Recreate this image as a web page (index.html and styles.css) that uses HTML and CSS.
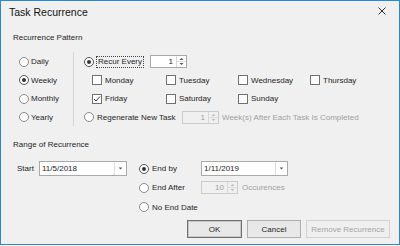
FILE: index.html
```html
<!DOCTYPE html>
<html lang="en">
<head>
    <meta charset="UTF-8">
    <title>Task Recurrence</title>
    <link rel="stylesheet" href="styles.css">
</head>
<body>
    <div class="window">
        <div class="titlebar">
            <span class="title">Task Recurrence</span>
            <svg class="close" viewBox="0 0 8 8"><path d="M0.5 0.5 L7.5 7.5 M7.5 0.5 L0.5 7.5" stroke="#333" stroke-width="1"/></svg>
        </div>
        <div class="content">
            <div class="group-label">Recurrence Pattern</div>
            <div class="pattern">
                <div class="freq">
                    <div class="opt"><span class="radio"></span>Daily</div>
                    <div class="opt"><span class="radio on"></span>Weekly</div>
                    <div class="opt"><span class="radio"></span>Monthly</div>
                    <div class="opt"><span class="radio"></span>Yearly</div>
                </div>
                <div class="divider"></div>
                <div class="recur">
                    <div class="opt">
                        <span class="radio on"></span>
                        <span class="focus">Recur Every</span>
                        <div class="spin">
                            <span class="val">1</span>
                            <span class="arrows">
                                <svg viewBox="0 0 9 11"><path d="M2.5 4 L4.5 2 L6.5 4 Z M2.5 7 L6.5 7 L4.5 9 Z" fill="#555"/><path d="M0 5.5 H9" stroke="#ddd"/></svg>
                            </span>
                        </div>
                    </div>
                    <div class="days">
                        <div class="opt"><span class="check"></span>Monday</div>
                        <div class="opt"><span class="check"></span>Tuesday</div>
                        <div class="opt"><span class="check"></span>Wednesday</div>
                        <div class="opt"><span class="check"></span>Thursday</div>
                    </div>
                    <div class="days">
                        <div class="opt">
                            <span class="check"><svg viewBox="0 0 8 8"><path d="M1 4 L3 6 L7 1.5" fill="none" stroke="#333" stroke-width="1"/></svg></span>Friday
                        </div>
                        <div class="opt"><span class="check"></span>Saturday</div>
                        <div class="opt"><span class="check"></span>Sunday</div>
                    </div>
                    <div class="opt">
                        <span class="radio"></span>
                        <span class="regen">Regenerate New Task</span>
                        <div class="spin disabled">
                            <span class="val">1</span>
                            <span class="arrows">
                                <svg viewBox="0 0 9 11"><path d="M2.5 4 L4.5 2 L6.5 4 Z M2.5 7 L6.5 7 L4.5 9 Z" fill="#bbb"/><path d="M0 5.5 H9" stroke="#ddd"/></svg>
                            </span>
                        </div>
                        <span class="muted after">Week(s) After Each Task Is Completed</span>
                    </div>
                </div>
            </div>

            <div class="group-label range-label">Range of Recurrence</div>
            <div class="range">
                <div class="start">
                    <span class="start-label">Start</span>
                    <div class="combo">
                        <span class="combo-text">11/5/2018</span>
                        <span class="drop"><svg viewBox="0 0 12 13"><path d="M4 5.5 L8 5.5 L6 7.5 Z" fill="#555"/></svg></span>
                    </div>
                </div>
                <div class="ends">
                    <div class="opt"><span class="radio on"></span>End by</div>
                    <div class="combo">
                        <span class="combo-text">1/11/2019</span>
                        <span class="drop"><svg viewBox="0 0 12 13"><path d="M4 5.5 L8 5.5 L6 7.5 Z" fill="#555"/></svg></span>
                    </div>
                    <div class="opt"><span class="radio"></span>End After</div>
                    <div class="opt">
                        <div class="spin disabled first">
                            <span class="val">10</span>
                            <span class="arrows">
                                <svg viewBox="0 0 9 11"><path d="M2.5 4 L4.5 2 L6.5 4 Z M2.5 7 L6.5 7 L4.5 9 Z" fill="#bbb"/><path d="M0 5.5 H9" stroke="#ddd"/></svg>
                            </span>
                        </div>
                        <span class="muted after">Occurences</span>
                    </div>
                    <div class="opt"><span class="radio"></span>No End Date</div>
                </div>
            </div>

            <div class="actions">
                <button class="btn default">OK</button>
                <button class="btn cancel">Cancel</button>
                <button class="btn remove" disabled>Remove Recurrence</button>
            </div>
        </div>
    </div>
</body>
</html>
```

FILE: styles.css
```css
* {
    box-sizing: border-box;
}

body {
    margin: 0;
    background: #fff;
    font-family: "Liberation Sans", Arial, sans-serif;
    font-size: 8px;
    color: #1e1e1e;
}

.window {
    width: 400px;
    height: 245px;
    border: 1px solid #2b88d8;
    background: #f0f0f0;
}

.titlebar {
    display: flex;
    justify-content: space-between;
    height: 23px;
    padding: 0 13px 0 8px;
}

.title {
    font-size: 10.5px;
    line-height: 23px;
    color: #111;
}

.close {
    width: 8px;
    height: 8px;
    margin-top: 6px;
}

.content {
    padding: 0 9px 0 12px;
}

.group-label {
    line-height: 14px;
    margin-top: 7px;
}

.range-label {
    margin-top: 12px;
}

/* pattern block */
.pattern {
    display: flex;
    height: 74px;
    margin-top: 7px;
}

.freq {
    width: 60px;
    padding-left: 6px;
    display: grid;
    grid-template-rows: 19px 18px 19px 18px;
}

.divider {
    width: 1px;
    background: #d6d6d6;
}

.recur {
    flex: 1;
    padding-left: 10px;
    display: grid;
    grid-template-rows: 19px 18px 19px 18px;
}

.days {
    display: grid;
    grid-template-columns: 74px 72px 72px auto;
    margin-left: 8px;
}

.opt {
    display: flex;
    align-items: center;
    gap: 2px;
    white-space: nowrap;
}

.radio {
    width: 10px;
    height: 10px;
    border: 1px solid #8a8a8a;
    border-radius: 50%;
    background: #fff;
    display: flex;
    align-items: center;
    justify-content: center;
    flex-shrink: 0;
}

.radio.on {
    border-color: #555;
}

.radio.on::after {
    content: "";
    width: 4px;
    height: 4px;
    border-radius: 50%;
    background: #333;
}

.check {
    width: 10px;
    height: 10px;
    border: 1px solid #707070;
    background: #fff;
    margin-right: 1px;
    display: flex;
    flex-shrink: 0;
}

.check svg {
    width: 8px;
    height: 8px;
}

.focus {
    height: 12px;
    line-height: 10px;
    border: 1px dotted #444;
    padding: 0 1px;
}

.regen {
    width: 83px;
    margin-left: 1px;
}

.spin {
    display: flex;
    width: 37px;
    height: 13px;
    border: 1px solid #a9a9a9;
    background: #fff;
    margin-left: 4px;
}

.regen + .spin {
    margin-left: 0;
}

.spin.first {
    margin-left: 0;
}

.spin .val {
    flex: 1;
    text-align: right;
    padding-right: 3px;
    line-height: 11px;
}

.spin .arrows {
    width: 10px;
    border-left: 1px solid #d8d8d8;
    display: flex;
}

.spin .arrows svg {
    width: 9px;
    height: 11px;
}

.spin.disabled {
    background: #f0f0f0;
    border-color: #cccccc;
    color: #a0a0a0;
}

.muted {
    color: #a0a0a0;
}

.after {
    margin-left: 1px;
}

/* range block */
.range {
    display: flex;
    margin-top: 7px;
}

.start {
    width: 126px;
    height: 19px;
    display: flex;
    align-items: center;
    padding-left: 4px;
}

.start-label {
    width: 22px;
}

.ends {
    display: grid;
    grid-template-columns: 62px auto;
    grid-template-rows: 19px 19px 20px;
    align-items: center;
}

.ends .opt {
    gap: 3px;
}

.combo {
    display: flex;
    width: 88px;
    height: 15px;
    border: 1px solid #a9a9a9;
    background: #fff;
}

.ends .combo {
    width: 87px;
}

.combo-text {
    flex: 1;
    padding-left: 2px;
    line-height: 13px;
}

.drop {
    width: 12px;
    border-left: 1px solid #dcdcdc;
    display: flex;
}

.drop svg {
    width: 11px;
    height: 13px;
}

/* buttons */
.actions {
    display: flex;
    justify-content: flex-end;
    gap: 5px;
    margin-top: 3px;
}

.btn {
    height: 18px;
    padding: 0;
    font-family: inherit;
    font-size: 8px;
    color: #1e1e1e;
    background: #e8e8e8;
    border: 1px solid #adadad;
}

.btn.default {
    width: 55px;
    border-color: #6f6f6f;
    box-shadow: inset 0 0 0 1px #c8c8c8;
}

.btn.cancel {
    width: 54px;
}

.btn.remove {
    width: 84px;
    background: #efefef;
    border-color: #d2d2d2;
    color: #a4a4a4;
}
```
